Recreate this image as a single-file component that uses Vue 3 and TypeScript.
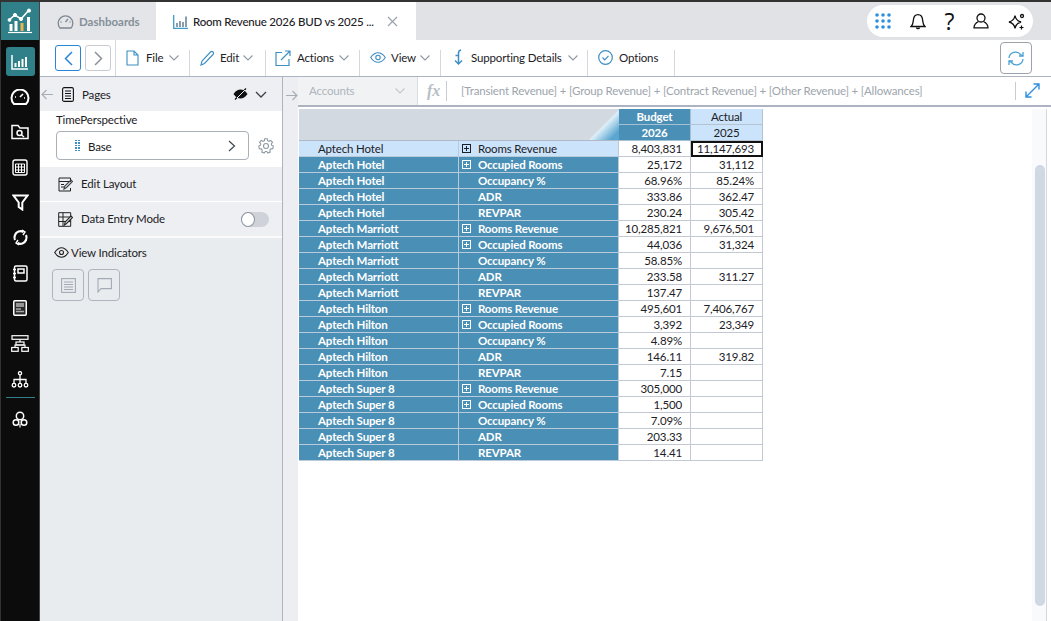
<script setup lang="ts">
interface Row { a: string; b: string; plus: boolean; c: string; d: string }
const hotels = ['Aptech Hotel', 'Aptech Marriott', 'Aptech Hilton', 'Aptech Super 8']
const vals: string[][][] = [
  [['8,403,831', '11,147,693'], ['25,172', '31,112'], ['68.96%', '85.24%'], ['333.86', '362.47'], ['230.24', '305.42']],
  [['10,285,821', '9,676,501'], ['44,036', '31,324'], ['58.85%', ''], ['233.58', '311.27'], ['137.47', '']],
  [['495,601', '7,406,767'], ['3,392', '23,349'], ['4.89%', ''], ['146.11', '319.82'], ['7.15', '']],
  [['305,000', ''], ['1,500', ''], ['7.09%', ''], ['203.33', ''], ['14.41', '']],
]
const measures = ['Rooms Revenue', 'Occupied Rooms', 'Occupancy %', 'ADR', 'REVPAR']
const rows: Row[] = []
hotels.forEach((h, i) => measures.forEach((m, j) => rows.push({ a: h, b: m, plus: j < 2, c: vals[i][j][0], d: vals[i][j][1] })))
</script>

<template>
  <div class="app">
    <aside class="rail">
      <div class="logo">
        <svg width="26" height="26" viewBox="0 0 26 26" fill="none" stroke="#fff">
          <path d="M2 12 8 7l6 4 8-9" stroke-width="1.6"/>
          <circle cx="8" cy="7" r="1.6" fill="#fff"/><circle cx="14" cy="11" r="1.6" fill="#fff"/><circle cx="22" cy="2.6" r="1.6" fill="#fff"/><circle cx="2.5" cy="12" r="1.4" fill="#fff"/>
          <path d="M1 24.5h24" stroke-width="1.2"/>
          <path d="M4 23v-7M9 23v-10M21.500 23V9" stroke-width="3"/>
          <path d="M15 23v-8" stroke="#e8b64c" stroke-width="3"/>
        </svg>
      </div>
      <div class="rail-icons">
        <div class="ri active">
          <svg width="18" height="16" viewBox="0 0 18 16" fill="none" stroke="#fff" stroke-width="1.5"><path d="M1 1v14h16"/><path d="M4.500 13V9M8 13V7M11.500 13V5M15 13V3" stroke-width="2"/></svg>
        </div>
        <div class="ri"><svg width="20" height="16" viewBox="0 0 20 16" fill="none" stroke="#fff" stroke-width="2"><path d="M4 15a8.500 8.500 0 1 1 12 0Z"/><path d="M10 8l3-3M5 8h1M14 9h1" stroke-width="1.600"/></svg></div>
        <div class="ri"><svg width="18" height="16" viewBox="0 0 18 16" fill="none" stroke="#fff" stroke-width="1.500"><path d="M1 14.500V1.500h6l2 2.500h8v10.500Z"/><circle cx="8.500" cy="9" r="2.500"/><path d="M10.500 11l2.500 2"/></svg></div>
        <div class="ri"><svg width="16" height="17" viewBox="0 0 16 17" fill="none" stroke="#fff" stroke-width="1.400"><rect x="1" y="1" width="14" height="15" rx="2"/><path d="M3.500 5h9v8.500h-9ZM3.500 8h9M3.500 11h9M6.500 5v8.500M9.500 5v8.500" stroke-width="1"/></svg></div>
        <div class="ri"><svg width="17" height="17" viewBox="0 0 17 17" fill="none" stroke="#fff" stroke-width="2"><path d="M1.500 1.500h14l-5.200 7v7l-3.600-2.500V8.500Z"/></svg></div>
        <div class="ri"><svg width="17" height="17" viewBox="0 0 17 17" fill="none" stroke="#fff" stroke-width="2.200"><path d="M3 6a6 6 0 0 1 8.500-3M14 11a6 6 0 0 1-8.500 3M3 11a6 6 0 0 1 0-5M14 6a6 6 0 0 1 0 5"/><path d="M10 1l3 2-2 3M7 16l-3-2 2-3" stroke-width="1.400"/></svg></div>
        <div class="ri"><svg width="16" height="17" viewBox="0 0 16 17" fill="none" stroke="#fff" stroke-width="1.500"><rect x="2.500" y="1" width="12.500" height="15" rx="1.500"/><rect x="6" y="4" width="6" height="4"/><path d="M1 4.500h3M1 8.500h3M1 12.500h3"/></svg></div>
        <div class="ri"><svg width="14" height="16" viewBox="0 0 14 16"><rect x="0.750" y="0.750" width="12.500" height="14.500" rx="1" fill="#2b2b2b" stroke="#fff" stroke-width="1.500"/><path d="M3 4h8M3 6h8" stroke="#fff" stroke-width="1.200"/><path d="M3 9h5M3 11.500h8" stroke="#aaa" stroke-width="1.500"/></svg></div>
        <div class="ri"><svg width="18" height="17" viewBox="0 0 18 17" fill="none" stroke="#fff" stroke-width="1.200"><rect x="1" y="0.700" width="16" height="3.600"/><rect x="0.700" y="12.500" width="6.500" height="3.800"/><rect x="10.800" y="12.500" width="6.500" height="3.800"/><rect x="5" y="7" width="8" height="3"/><path d="M9 4.300V7M4 12.500V10h10v2.500"/></svg></div>
        <div class="ri"><svg width="18" height="17" viewBox="0 0 18 17" fill="none" stroke="#fff" stroke-width="1.300"><circle cx="9" cy="2.200" r="1.600"/><path d="M9 4v9M3 12V8.500h12V12"/><circle cx="3" cy="14.200" r="1.800"/><circle cx="9" cy="14.200" r="1.800"/><circle cx="15" cy="14.200" r="1.800"/></svg></div>
        <div class="rail-div"></div>
        <div class="ri"><svg width="16" height="17" viewBox="0 0 16 17" fill="none" stroke="#fff" stroke-width="1.500"><circle cx="8" cy="5" r="3.700"/><circle cx="4" cy="11.500" r="2.800"/><circle cx="12" cy="11.500" r="2.800"/><path d="M8 13v3.500" stroke-width="1.200"/></svg></div>
      </div>
    </aside>

    <div class="main">
      <header class="tabs">
        <div class="tab tab-off">
          <svg width="17" height="15" viewBox="0 0 17 15" fill="none" stroke="#7d8791" stroke-width="1.300"><path d="M3 14a7.300 7.300 0 1 1 11 0Z"/><path d="M8.500 8l2.500-3M3.500 8h1M12.500 8h1"/></svg>
          <span>Dashboards</span>
        </div>
        <div class="tab tab-on">
          <svg width="15" height="15" viewBox="0 0 15 15" fill="none" stroke-width="1.300"><path d="M.7 1v13.300H15" stroke="#3f9dc7"/><path d="M4 13V9M7 13V7M10 13V8M13 13V2.500" stroke="#4a6a80"/></svg>
          <span class="tab-title">Room Revenue 2026 BUD vs 2025 ...</span>
          <svg class="tab-x" width="11" height="11" viewBox="0 0 11 11" stroke="#9aa3ad" stroke-width="1.200"><path d="M1 1l9 9M10 1l-9 9"/></svg>
        </div>
        <div class="pill">
          <svg width="16" height="16" viewBox="0 0 16 16" fill="#2f8fdf"><circle cx="2" cy="2" r="1.800"/><circle cx="8" cy="2" r="1.800"/><circle cx="14" cy="2" r="1.800"/><circle cx="2" cy="8" r="1.800"/><circle cx="8" cy="8" r="1.800"/><circle cx="14" cy="8" r="1.800"/><circle cx="2" cy="14" r="1.800"/><circle cx="8" cy="14" r="1.800"/><circle cx="14" cy="14" r="1.800"/></svg>
          <svg width="16" height="17" viewBox="0 0 16 17" fill="none" stroke="#111" stroke-width="1.300"><path d="M1 13.500c2-1.500 2-3 2.300-6C3.600 4 5.500 1.700 8 1.700s4.400 2.300 4.700 5.800c.3 3 .3 4.500 2.300 6Z"/><path d="M6.500 14.500a1.600 1.600 0 0 0 3 0" stroke-width="1.600"/></svg>
          <span class="q">?</span>
          <svg width="16" height="16" viewBox="0 0 16 16" fill="none" stroke="#111" stroke-width="1.300"><circle cx="8" cy="5" r="4"/><path d="M5.500 8.500C2.500 10 1 11.500 1 14.800h14c0-3.300-1.500-4.800-4.500-6.300"/></svg>
          <svg width="17" height="17" viewBox="0 0 17 17" fill="none" stroke="#111" stroke-width="1.300"><path d="M7 2.500C7.600 6.500 9 8 13 9 9 10 7.600 11.500 7 15.500 6.400 11.500 5 10 1 9 5 8 6.400 6.500 7 2.500Z"/><circle cx="14" cy="3" r="1.500"/><path d="M13.500 12.500v4M11.500 14.500h4" stroke-width="1.200"/></svg>
        </div>
      </header>

      <nav class="toolbar">
        <div class="nav-btns">
          <button class="nb nb-on"><svg width="9" height="15" viewBox="0 0 9 15" fill="none" stroke="#2a84d8" stroke-width="1.500"><path d="M8 1 1.500 7.500 8 14"/></svg></button>
          <button class="nb"><svg width="9" height="15" viewBox="0 0 9 15" fill="none" stroke="#8a929b" stroke-width="1.500"><path d="M1 1l6.500 6.500L1 14"/></svg></button>
        </div>
        <div class="tool t-file">
          <svg width="13" height="16" viewBox="0 0 13 16" fill="none" stroke="#3d8fc4" stroke-width="1.100"><path d="M1 1h7l4 4v10H1ZM8 1v4h4"/></svg>
          <span>File</span><svg class="car" width="10" height="6" viewBox="0 0 10 6" fill="none" stroke="#8f99a3" stroke-width="1.100"><path d="M.5.500 5 5 9.500.500"/></svg>
        </div>
        <div class="tool t-edit">
          <svg width="15" height="16" viewBox="0 0 15 16" fill="none" stroke="#3d8fc4" stroke-width="1.100"><path d="M1 15l1-4 8.500-9a1.600 1.600 0 0 1 2.500 2.500L4.500 13.500Z"/></svg>
          <span>Edit</span><svg class="car" width="10" height="6" viewBox="0 0 10 6" fill="none" stroke="#8f99a3" stroke-width="1.100"><path d="M.5.500 5 5 9.500.500"/></svg>
        </div>
        <div class="tool t-actions">
          <svg width="16" height="16" viewBox="0 0 16 16" fill="none" stroke="#3d8fc4" stroke-width="1.200"><path d="M7 2.500H1v13h13V9"/><path d="M6 10l9-9M10 1h5v5"/></svg>
          <span>Actions</span><svg class="car" width="10" height="6" viewBox="0 0 10 6" fill="none" stroke="#8f99a3" stroke-width="1.100"><path d="M.5.500 5 5 9.500.500"/></svg>
        </div>
        <div class="tool t-view">
          <svg width="16" height="11" viewBox="0 0 16 11" fill="none" stroke="#3d8fc4" stroke-width="1.100"><path d="M.7 5.500C3 2 5.500.700 8 .700s5 1.300 7.300 4.800C13 9 10.500 10.300 8 10.300S3 9 .7 5.500Z"/><circle cx="8" cy="5.500" r="2.200"/></svg>
          <span>View</span><svg class="car" width="10" height="6" viewBox="0 0 10 6" fill="none" stroke="#8f99a3" stroke-width="1.100"><path d="M.5.500 5 5 9.500.500"/></svg>
        </div>
        <div class="tool t-sup">
          <svg width="12" height="17" viewBox="0 0 12 17" fill="none" stroke="#3d8fc4" stroke-width="1.500"><path d="M9 1C7 1.500 6.500 2.500 6.500 4v11"/><path d="M3 11.500l3.500 3.500 3.500-3.500M3.500 6.500h3"/></svg>
          <span>Supporting Details</span><svg class="car" width="10" height="6" viewBox="0 0 10 6" fill="none" stroke="#8f99a3" stroke-width="1.100"><path d="M.5.500 5 5 9.500.500"/></svg>
        </div>
        <div class="tool t-opt">
          <svg width="15" height="15" viewBox="0 0 15 15" fill="none" stroke="#3d8fc4" stroke-width="1.200"><circle cx="7.500" cy="7.500" r="6.800"/><path d="M4.500 7.500l2.200 2.300 3.800-4"/></svg>
          <span>Options</span>
        </div>
        <button class="refresh">
          <svg width="16" height="15" viewBox="0 0 16 15" fill="none" stroke="#4aa0d5" stroke-width="1.300"><path d="M1 7a6.500 6.500 0 0 1 11.500-3.500L15 5M15 8a6.500 6.500 0 0 1-11.500 3.500L1 10"/><path d="M15 1v4h-4M1 14v-4h4"/></svg>
        </button>
      </nav>

      <div class="body">
        <section class="panel">
          <div class="p-head">
            <svg class="back" width="12" height="11" viewBox="0 0 12 11" fill="none" stroke="#a6adb5" stroke-width="1.100"><path d="M12 5.500H1M5.500 1 1 5.500 5.500 10"/></svg>
            <svg width="12" height="15" viewBox="0 0 12 15" fill="none" stroke="#111" stroke-width="1.100"><rect x=".6" y=".6" width="10.800" height="13.800" rx="1.500"/><path d="M3 4h6M3 6.500h6M3 9h6M3 11.500h6"/></svg>
            <span class="p-title">Pages</span>
            <svg class="hide" width="15" height="12" viewBox="0 0 15 12"><path d="M.5 6C3 2.500 5 1.500 7.500 1.500S12 2.500 14.500 6C12 9.500 10 10.500 7.500 10.500S3 9.500.5 6Z" fill="#111"/><path d="M2 11.500 13 .5" stroke="#111" stroke-width="1.200"/><path d="M4 10 12 2" stroke="#edeff2" stroke-width="1"/></svg>
            <svg class="down" width="12" height="7" viewBox="0 0 12 7" fill="none" stroke="#3b4148" stroke-width="1.300"><path d="M1 1l5 5 5-5"/></svg>
          </div>
          <div class="p-time">
            <div class="p-label">TimePerspective</div>
            <div class="p-row">
              <div class="select">
                <span class="dots"><i v-for="n in 10" :key="n"></i></span>
                <span class="sel-txt">Base</span>
                <svg class="sel-car" width="8" height="12" viewBox="0 0 8 12" fill="none" stroke="#3f464d" stroke-width="1.200"><path d="M1 1l5.500 5L1 11"/></svg>
              </div>
              <svg width="16" height="16" viewBox="0 0 16 16" fill="none" stroke="#8f99a3" stroke-width="1.100"><path d="M6.700 1h2.600l.4 2 1.500.7 1.800-1 1.700 2-1.200 1.600.3 1.400 1.700.9-.5 2.600-2 .2-1 1.300.4 2-2.400 1-1.200-1.600H7.400l-1.200 1.600-2.400-1 .4-2-1-1.300-2-.2-.5-2.600 1.700-.9.3-1.400L1.500 4.700l1.700-2 1.800 1 1.500-.7Z" transform="translate(.1 -.3) scale(.98)"/><circle cx="8" cy="8" r="2.500"/></svg>
            </div>
          </div>
          <div class="p-item">
            <svg width="15" height="15" viewBox="0 0 15 15" fill="none" stroke="#222" stroke-width="1"><path d="M12.500 5V1H1v13h11.500V11"/><path d="M1 4.500h11.500M3 7.500h3M3 10h3"/><path d="M6 12l.8-3L13 3l1.500 1.500-6 6Z" stroke="#3b4148" stroke-width="1.100"/></svg>
            <span>Edit Layout</span>
          </div>
          <div class="p-item p-entry">
            <svg width="15" height="15" viewBox="0 0 15 15" fill="none" stroke="#222" stroke-width="1"><path d="M.7.700h12v13.600H.7ZM.7 5h12M.7 9.500h12M5 .700v13.600"/><path d="M6.500 13l.6-3L13 4l1.500 1.500-6 6Z" fill="#fff" stroke="#222" stroke-width="1.100"/></svg>
            <span>Data Entry Mode</span>
            <div class="toggle"><b></b></div>
          </div>
          <div class="p-ind">
            <div class="ind-h">
              <svg width="15" height="11" viewBox="0 0 15 11" fill="none" stroke="#222" stroke-width="1.100"><path d="M.7 5.500C3 2 5 .700 7.500 .700S12 2 14.300 5.500C12 9 10 10.300 7.500 10.300S3 9 .7 5.500Z"/><circle cx="7.500" cy="5.500" r="2"/></svg>
              <span>View Indicators</span>
            </div>
            <div class="ind-btns">
              <div class="ib"><svg width="15" height="15" viewBox="0 0 15 15" fill="none" stroke="#a2aab3" stroke-width="1.100"><rect x=".6" y=".6" width="13.800" height="13.800"/><path d="M3 4h9M3 6.500h9M3 9h9M3 11.500h9"/></svg></div>
              <div class="ib"><svg width="15" height="15" viewBox="0 0 15 15" fill="none" stroke="#a2aab3" stroke-width="1.100"><path d="M.6.600h13.800v10H4L1 14V.6Z"/></svg></div>
            </div>
          </div>
        </section>

        <div class="strip">
          <svg width="12" height="11" viewBox="0 0 12 11" fill="none" stroke="#a6adb5" stroke-width="1.100"><path d="M0 5.500h11M6.500 1 11 5.500 6.500 10"/></svg>
        </div>

        <section class="content">
          <div class="formula">
            <div class="f-acc">
              <span>Accounts</span>
              <svg width="10" height="6" viewBox="0 0 10 6" fill="none" stroke="#c2c8ce" stroke-width="1.100"><path d="M.5.500 5 5 9.500.500"/></svg>
            </div>
            <span class="fx">fx</span>
            <span class="f-txt">[Transient Revenue] + [Group Revenue] + [Contract Revenue] + [Other Revenue] + [Allowances]</span>
            <i class="f-sep"></i>
            <svg class="expand" width="15" height="15" viewBox="0 0 15 15" fill="none" stroke="#2f8fdf" stroke-width="1.400"><path d="M1 14 14 1M8.500 1H14v5.500M1 8.500V14h5.500"/></svg>
          </div>
          <div class="grid-wrap">
            <div class="sheet">
              <div class="corner"><i class="tri"></i></div>
              <div class="h h-dark">Budget</div>
              <div class="h h-light">Actual</div>
              <div class="h h-dark">2026</div>
              <div class="h h-light">2025</div>
              <template v-for="(r, i) in rows" :key="i">
                <div class="rh" :class="{ sel: i === 0 }">{{ r.a }}</div>
                <div class="rh rh2" :class="{ sel: i === 0 }">
                  <span class="plus" :class="{ hide2: !r.plus }"></span>{{ r.b }}
                </div>
                <div class="cell">{{ r.c }}</div>
                <div class="cell" :class="{ cur: i === 0 }">{{ r.d }}</div>
              </template>
            </div>
            <div class="track"><div class="thumb"></div></div>
          </div>
        </section>
      </div>
    </div>
  </div>
</template>

<style>
html, body { margin: 0; padding: 0; background: #fff; }
</style>

<style scoped>
.app { display: flex; width: 1051px; height: 621px; overflow: hidden; border-top: 2px solid #333; box-sizing: border-box; font-family: Lato, "Liberation Sans", sans-serif; font-size: 11.500px; letter-spacing: -0.15px; color: #1c2126; background: #fff; }
.rail { width: 40px; flex: none; background: #0c0c0c; border-left: 1px solid #333; box-sizing: border-box; border-right: 1px solid #444; }
.logo { height: 38px; background: #2f8089; display: flex; align-items: center; justify-content: center; }
.rail-icons { display: flex; flex-direction: column; align-items: center; padding-top: 7px; }
.ri { width: 29px; height: 35.3px; display: flex; align-items: center; justify-content: center; flex: none; }
.ri.active { height: 29px; background: #2f8089; border-radius: 3px; margin-bottom: 3px; }
.rail-div { width: 29px; height: 1px; background: #2f8089; margin: 0 0 4px; }
.main { flex: 1; min-width: 0; display: flex; flex-direction: column; }
.tabs { height: 38px; flex: none; background: #e1e2e5; display: flex; align-items: stretch; position: relative; }
.tab { display: flex; align-items: center; }
.tab-off { width: 116px; box-sizing: border-box; padding-left: 17px; gap: 5px; color: #858e98; background: #e3e5e8; font-weight: 700; letter-spacing: 0; }
.tab-on { width: 260px; box-sizing: border-box; background: #fff; padding-left: 17px; gap: 5px; font-weight: 500; letter-spacing: -0.2px; }
.tab-x { margin-left: 8px; }
.tab-title { white-space: nowrap; }
.pill { position: absolute; right: 18px; top: 3px; width: 166px; height: 32px; box-sizing: border-box; background: #fff; border-radius: 16px; display: flex; align-items: center; justify-content: space-between; padding: 0 8px 0 8px; }
.q { font-size: 23px; font-weight: 400; color: #111; font-family: "Open Sans", sans-serif; line-height: 23px; }
.toolbar { height: 36px; flex: none; display: flex; align-items: stretch; position: relative; background: #fff; border-bottom: 1px solid #aeb3c2; }
.nav-btns { width: 76px; flex: none; box-sizing: border-box; display: flex; align-items: center; gap: 4px; padding-left: 15px; border-right: 1px solid #d5d9de; }
.nb { width: 26px; height: 26px; box-sizing: border-box; border: 1px solid #c8ccd1; border-radius: 3px; background: #fff; padding: 0; display: flex; align-items: center; justify-content: center; }
.nb-on { border-color: #2a84d8; }
.tool { box-sizing: border-box; display: flex; align-items: center; position: relative; padding-left: 10px; padding-bottom: 1px; gap: 7px; flex: none; }
.tool::after { content: ""; position: absolute; right: 0; top: 10px; bottom: 0; width: 1px; background: #d5d9de; }
.tool span { white-space: nowrap; }
.t-file { width: 74px; }
.t-edit { width: 76px; padding-left: 10px; gap: 5px; }
.t-actions { width: 94px; padding-left: 9px; gap: 6px; }
.t-view { width: 81px; padding-left: 10px; gap: 5px; }
.t-sup { width: 147px; padding-left: 11px; gap: 7px; }
.t-opt { width: 87px; gap: 6px; }
.car { margin-left: -1px; }
.refresh { position: absolute; right: 19px; top: 2px; width: 32px; height: 32px; box-sizing: border-box; border: 1px solid #9ca3ab; border-radius: 4px; background: #fff; padding: 0; display: flex; align-items: center; justify-content: center; }
.body { flex: 1; min-height: 0; display: flex; }
.panel { width: 243px; box-sizing: border-box; flex: none; background: #e9ecef; border-right: 1px solid #aeb3c2; display: flex; flex-direction: column; }
.p-head { height: 34px; flex: none; background: #edeff2; display: flex; align-items: center; padding-left: 1px; box-sizing: border-box; }
.back { margin-right: 9px; }
.p-title { margin-left: 8px; flex: 1; }
.hide { margin-right: 6px; }
.down { margin-right: 15px; margin-left: 1px; }
.p-time { height: 56px; flex: none; background: #fff; box-sizing: border-box; padding: 1px 0 0 16px; }
.p-label { line-height: 15px; }
.p-row { display: flex; align-items: center; margin-top: 4px; gap: 9px; }
.select { width: 193px; height: 29px; box-sizing: border-box; border: 1px solid #a9b0b8; border-radius: 4px; display: flex; align-items: center; padding: 0 12px 0 18px; }
.dots { display: grid; grid-template-columns: 2px 2px; gap: 1px 1px; width: 5px; margin-right: 8px; }
.dots i { width: 2px; height: 1.400px; background: #3d8fc4; display: block; }
.sel-txt { flex: 1; padding-top: 1px; }
.p-item { height: 34px; flex: none; box-sizing: content-box; display: flex; align-items: center; padding-left: 18px; gap: 8px; background: #edeff2; border-bottom: 1px solid #fff; }
.p-item > span { margin-top: -2px; }
.p-entry { position: relative; border-bottom: 2px solid #fbfbfc; }
.toggle { position: absolute; right: 13px; top: 10px; width: 28px; height: 15px; border-radius: 8px; background: #cfd3d9; }
.toggle b { display: block; width: 14px; height: 15px; box-sizing: border-box; border: 1px solid #8c949c; border-radius: 50%; background: #fff; }
.p-ind { padding: 7px 0 0 14px; }
.ind-h { display: flex; align-items: center; gap: 2px; height: 15px; }
.ind-btns { display: flex; gap: 4px; margin-top: 9px; margin-left: -2px; }
.ib { width: 32px; height: 32px; box-sizing: border-box; border: 1px solid #aeb5bd; border-radius: 4px; display: flex; align-items: center; justify-content: center; }
.strip { width: 15px; flex: none; background: #eceef1; padding: 13px 0 0 3px; box-sizing: border-box; }
.content { flex: 1; min-width: 0; display: flex; flex-direction: column; position: relative; }
.formula { flex: none; height: 28px; border-bottom: 2px solid #aeb3c2; display: flex; align-items: center; position: relative; color: #9da5ad; letter-spacing: -0.17px; }
.f-acc { width: 120px; align-self: stretch; box-sizing: border-box; background: #f1f2f4; padding: 0 12px 1px 11px; display: flex; align-items: center; justify-content: space-between; border-right: 1px solid #d9dce0; color: #aeb5bc; flex: none; }
.fx { font-family: "Liberation Serif", serif; font-style: italic; font-size: 16px; font-weight: 700; color: #b8bec5; width: 19px; margin-left: 9px; margin-top: -1px; border-right: 1px solid #c8ccd1; line-height: 20px; flex: none; }
.f-txt { margin-left: 14px; margin-top: -1px; white-space: nowrap; }
.f-sep { position: absolute; right: 35px; top: 5px; width: 1px; height: 18px; background: #c8ccd1; }
.expand { position: absolute; right: 11px; top: 6px; }
.grid-wrap { flex: 1; min-height: 0; position: relative; padding: 2px 0 0 1px; }
.sheet { display: grid; grid-template-columns: 160px 160px 72px 72px; grid-template-rows: repeat(22, 16px); width: 464px; }
.corner { grid-row: 1 / 3; grid-column: 1 / 3; background: #d3d9e1; position: relative; border-bottom: 1px solid #aeb8c6; box-sizing: border-box; overflow: hidden; }
.tri { position: absolute; right: 0; bottom: 0; width: 30px; height: 30px; clip-path: polygon(100% 0, 100% 100%, 0 100%); background: linear-gradient(135deg, #e4f2fb 50%, #5aa6d0 85%); }
.h { display: flex; align-items: center; justify-content: center; box-sizing: border-box; border-right: 1px solid #b5c2d0; border-bottom: 1px solid #b5c2d0; }
.h-dark { background: #4a8fb5; color: #fff; font-weight: 700; border-color: #a5c0d3; }
.h-light { background: #cce4fb; color: #1c2126; }
.rh { background: #4a8fb5; color: #fff; font-weight: 700; padding-left: 19px; display: flex; align-items: center; box-sizing: border-box; border-bottom: 1px solid #b9cad8; border-right: 1px solid #b9cad8; white-space: nowrap; }
.rh2 { padding-left: 1px; }
.rh.sel { background: #cce4fb; color: #1c2126; font-weight: 400; }
.plus { width: 9px; height: 9px; box-sizing: border-box; border: 1px solid currentColor; margin: 0 7px 0 2px; position: relative; flex: none; }
.plus::before { content: ""; position: absolute; left: 1px; right: 1px; top: 3px; height: 1px; background: currentColor; }
.plus::after { content: ""; position: absolute; top: 1px; bottom: 1px; left: 3px; width: 1px; background: currentColor; }
.hide2 { visibility: hidden; }
.cell { display: flex; align-items: center; justify-content: flex-end; box-sizing: border-box; padding-right: 8px; border-bottom: 1px solid #c3c9d3; border-right: 1px solid #c3c9d3; background: #fff; color: #1c2126; }
.cur { outline: 2px solid #111; outline-offset: -2px; }
.track { position: absolute; right: 4px; top: 2px; bottom: 0; width: 14px; background: #f9fafb; border-right: 1px solid #d5d8dc; }
.thumb { position: absolute; top: 56px; bottom: 15px; left: 3px; width: 10px; background: #d0d8e3; border-radius: 5px; }
</style>
